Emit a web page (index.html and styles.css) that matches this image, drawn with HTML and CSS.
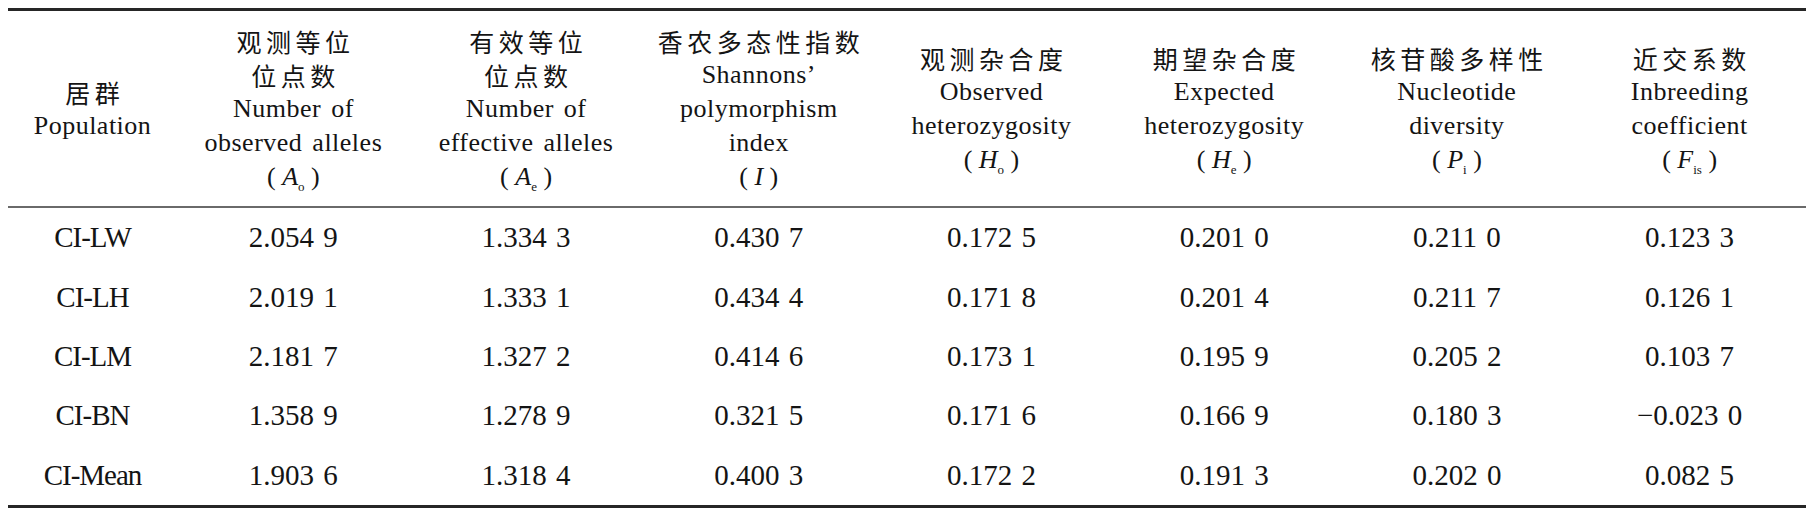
FILE: index.html
```html
<!DOCTYPE html>
<html lang="en">
<head>
<meta charset="utf-8">
<title>居群遗传多样性参数</title>
<link rel="stylesheet" href="styles.css">
</head>
<body>
<table class="data">
  <colgroup>
    <col class="c-pop">
    <col class="c-val"><col class="c-val"><col class="c-val"><col class="c-val">
    <col class="c-val"><col class="c-val"><col class="c-val">
  </colgroup>
  <thead>
    <tr>
      <th><div class="zh" lang="zh-CN">居群</div><div class="en">Population</div></th>
      <th><div class="zh" lang="zh-CN">观测等位</div><div class="zh" lang="zh-CN">位点数</div><div class="en">Number of</div><div class="en">observed alleles</div><div class="sym">( <i>A</i><sub>o</sub> )</div></th>
      <th><div class="zh" lang="zh-CN">有效等位</div><div class="zh" lang="zh-CN">位点数</div><div class="en">Number of</div><div class="en">effective alleles</div><div class="sym">( <i>A</i><sub>e</sub> )</div></th>
      <th><div class="zh" lang="zh-CN">香农多态性指数</div><div class="en">Shannons’</div><div class="en">polymorphism</div><div class="en">index</div><div class="sym">( <i>I</i> )</div></th>
      <th><div class="zh" lang="zh-CN">观测杂合度</div><div class="en">Observed</div><div class="en">heterozygosity</div><div class="sym">( <i>H</i><sub>o</sub> )</div></th>
      <th><div class="zh" lang="zh-CN">期望杂合度</div><div class="en">Expected</div><div class="en">heterozygosity</div><div class="sym">( <i>H</i><sub>e</sub> )</div></th>
      <th><div class="zh" lang="zh-CN">核苷酸多样性</div><div class="en">Nucleotide</div><div class="en">diversity</div><div class="sym">( <i>P</i><sub>i</sub> )</div></th>
      <th><div class="zh" lang="zh-CN">近交系数</div><div class="en">Inbreeding</div><div class="en">coefficient</div><div class="sym">( <i>F</i><sub>is</sub> )</div></th>
    </tr>
  </thead>
  <tbody>
    <tr><td class="lab">CI-LW</td><td>2.054 9</td><td>1.334 3</td><td>0.430 7</td><td>0.172 5</td><td>0.201 0</td><td>0.211 0</td><td>0.123 3</td></tr>
    <tr><td class="lab">CI-LH</td><td>2.019 1</td><td>1.333 1</td><td>0.434 4</td><td>0.171 8</td><td>0.201 4</td><td>0.211 7</td><td>0.126 1</td></tr>
    <tr><td class="lab">CI-LM</td><td>2.181 7</td><td>1.327 2</td><td>0.414 6</td><td>0.173 1</td><td>0.195 9</td><td>0.205 2</td><td>0.103 7</td></tr>
    <tr><td class="lab">CI-BN</td><td>1.358 9</td><td>1.278 9</td><td>0.321 5</td><td>0.171 6</td><td>0.166 9</td><td>0.180 3</td><td>−0.023 0</td></tr>
    <tr class="last"><td class="lab">CI-Mean</td><td>1.903 6</td><td>1.318 4</td><td>0.400 3</td><td>0.172 2</td><td>0.191 3</td><td>0.202 0</td><td>0.082 5</td></tr>
  </tbody>
</table>
</body>
</html>
```
FILE: styles.css
```css
body {
  margin: 8px;
  background: #ffffff;
  color: #141414;
  font-family: "Liberation Serif", "Times New Roman", serif;
}

.data {
  width: 1798px;
  table-layout: fixed;
  border-collapse: separate;
  border-spacing: 0;
}

.c-pop { width: 169px; }
.c-val { width: 232.7px; }

.data th {
  height: 195px;
  padding: 0;
  border-top: 3px solid #262626;
  border-bottom: 2px solid #6a6a6a;
  font-weight: normal;
  text-align: center;
  vertical-align: middle;
}

.zh {
  font-family: "Noto Sans CJK SC", sans-serif;
  font-size: 25px;
  font-weight: 400;
  line-height: 34px;
  letter-spacing: 4.5px;
  padding-left: 4.5px;
  white-space: nowrap;
}

.en {
  font-family: "Liberation Serif", "Times New Roman", serif;
  font-size: 26px;
  line-height: 34px;
  letter-spacing: 0.5px;
  word-spacing: 3px;
  white-space: nowrap;
}

.sym {
  font-family: "Liberation Serif", "Times New Roman", serif;
  font-size: 26px;
  line-height: 34px;
  white-space: pre;
}

.sym i {
  font-style: italic;
}

.sym sub {
  font-size: 13px;
  vertical-align: -6px;
  line-height: 0;
}

.data td {
  height: 59.4px;
  padding: 0;
  text-align: center;
  vertical-align: middle;
  font-family: "Liberation Serif", "Times New Roman", serif;
  font-size: 29px;
  word-spacing: 2px;
  white-space: nowrap;
}

.data td.lab {
  letter-spacing: -1px;
  word-spacing: 0;
}

.data tr.last td {
  border-bottom: 3px solid #262626;
}
```
